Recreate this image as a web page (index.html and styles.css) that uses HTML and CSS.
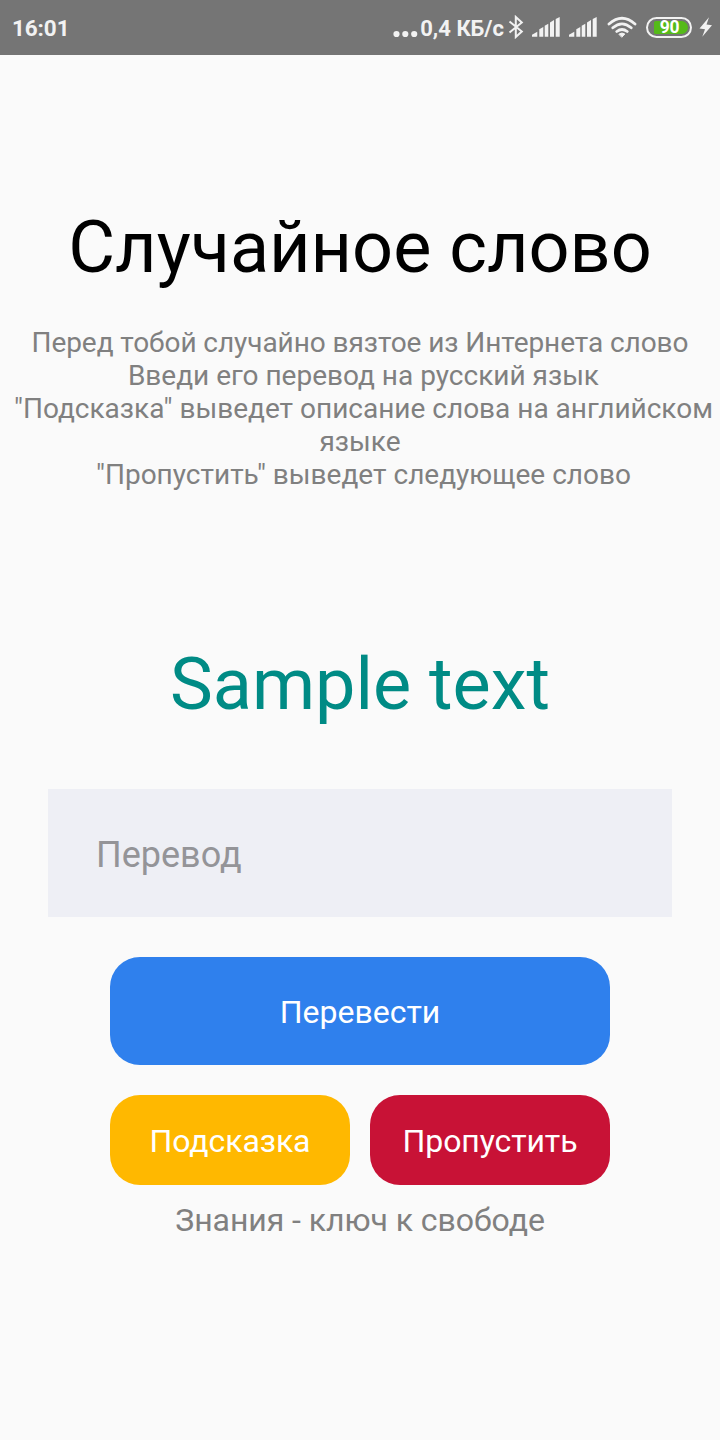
FILE: index.html
```html
<!DOCTYPE html>
<html lang="ru">
<head>
<meta charset="utf-8">
<title>Случайное слово</title>
<link rel="stylesheet" href="styles.css">
</head>
<body>
<header class="status">
  <span class="clock">16:01</span>
  <svg class="dots" width="25" height="8" viewBox="0 0 25 8"><circle cx="3.500" cy="4" r="3.100"/><circle cx="12.300" cy="4" r="3.100"/><circle cx="21.200" cy="4" r="3.100"/></svg>
  <span class="speed">0,4 КБ/с</span>
  <svg class="bt" width="16" height="24" viewBox="0 0 16 24"><path d="M1.500 6.500L13.800 16.500L7.800 22V2L13.800 7.500L1.500 17.500"/></svg>
  <svg class="signal" width="28" height="20" viewBox="0 0 28 20"><path d="M0 19.700V17.800L5.300 14.800V19.700zM7.300 19.700V12.200L11.300 10V19.700zM12.700 19.700V8.800L16.300 6.800V19.700zM18 19.700V5.600L22 3V19.700zM23.700 19.700V2.100L27.700 0V19.700z"/></svg>
  <svg class="signal second" width="28" height="20" viewBox="0 0 28 20"><path d="M0 19.700V17.800L5.300 14.800V19.700zM7.300 19.700V12.200L11.300 10V19.700zM12.700 19.700V8.800L16.300 6.800V19.700zM18 19.700V5.600L22 3V19.700zM23.700 19.700V2.100L27.700 0V19.700z"/></svg>
  <svg class="wifi" width="30" height="22" viewBox="0 0 30 22"><path d="M2 8Q15-3.500 28 8M5.800 11.800Q15 4 24.200 11.800M9.800 15.500Q15 11.500 20.200 15.500"/><path class="wifi-dot" d="M12.200 18Q15 16 17.800 18L15 21z"/></svg>
  <span class="battery"><span class="charge">90</span></span>
  <svg class="bolt" width="14" height="20" viewBox="0 0 14 20"><path d="M10 .3L.5 11.500L6 12.200L3.300 19.700L13 8.200L7.500 7.500z"/></svg>
</header>
<main class="screen">
  <h1 class="title">Случайное слово</h1>
  <p class="help"><span class="intro">Перед тобой случайно вязтое из Интернета слово</span><br>&nbsp;Введи его перевод на русский язык<br>&nbsp;"Подсказка" выведет описание слова на английском<br>языке<br>&nbsp;"Пропустить" выведет следующее слово</p>
  <div class="word">Sample text</div>
  <input class="answer" placeholder="Перевод" aria-label="Перевод">
  <button class="btn translate">Перевести</button>
  <div class="row"><button class="btn hint">Подсказка</button><button class="btn skip">Пропустить</button></div>
  <p class="motto">Знания - ключ к свободе</p>
</main>
</body>
</html>
```
FILE: styles.css
```css
* { box-sizing: border-box; }
body { margin: 0; height: 1440px; overflow: hidden; background: #fafafa; font-family: Roboto, "Noto Sans", sans-serif; }
.status { height: 55px; padding: 0 7px 0 12px; display: flex; align-items: center; background: #757575; color: #f2f2f2; font-size: 22.5px; font-weight: 700; }
.status svg { flex: none; fill: #f2f2f2; }
.clock { margin: 0 auto 0 0; letter-spacing: -.1px; }
.dots { margin: 12px 2px 0 0; }
.speed { margin-top: 2px; white-space: nowrap; font-size: 22px; }
.status .bt { margin: -1px 0 0 4px; fill: none; stroke: #f2f2f2; stroke-width: 2; }
.signal { margin: -2px 0 0 8px; }
.signal.second { margin-left: 9px; }
.status .wifi { margin: -1px 0 0 10px; stroke: #f2f2f2; stroke-width: 2.8; stroke-linecap: round; fill: none; }
.wifi-dot { fill: #f2f2f2; stroke-width: 1; }
.battery { width: 46px; height: 21px; margin: -1px 0 0 9px; padding: 2px 2px 2px 6px; border: 2px solid #f2f2f2; border-radius: 11px; }
.charge { display: block; height: 13px; padding-right: 3px; border-radius: 2px 7px 7px 2px; background: #55ba19; color: #fff; font-size: 17.5px; line-height: 13px; letter-spacing: -.3px; text-align: center; }
.bolt { margin: -1px 0 0 7px; }
.screen { display: flex; flex-direction: column; align-items: center; }
.title { margin: 151px 0 0; font-size: 72px; line-height: 84px; font-weight: 400; color: #000; white-space: nowrap; }
.help { margin: 36px 0 0; font-size: 28px; line-height: 33px; color: #808080; text-align: center; white-space: nowrap; }
.intro { letter-spacing: -.07px; }
.word { margin-top: 152px; font-size: 72px; line-height: 84px; color: #008b85; }
.answer { margin-top: 62px; width: 624px; height: 128px; padding: 4px 48px 0; border: 0; border-radius: 0; background: #eeeff5; font: 36px Roboto, sans-serif; }
.answer::placeholder { color: #949498; opacity: 1; }
.btn { border: 0; padding: 2px 0 0; border-radius: 30px; color: #fff; font: 32px Roboto, sans-serif; }
.translate { margin-top: 40px; width: 500px; height: 108px; background: #2f80ed; }
.row { display: flex; gap: 20px; margin-top: 30px; }
.row .btn { width: 240px; height: 90px; letter-spacing: -.1px; }
.hint { background: #ffb800; }
.skip { background: #c81236; }
.motto { margin: 16px 0 0; font-size: 32px; line-height: 38px; color: #808080; letter-spacing: -.06px; }
```
